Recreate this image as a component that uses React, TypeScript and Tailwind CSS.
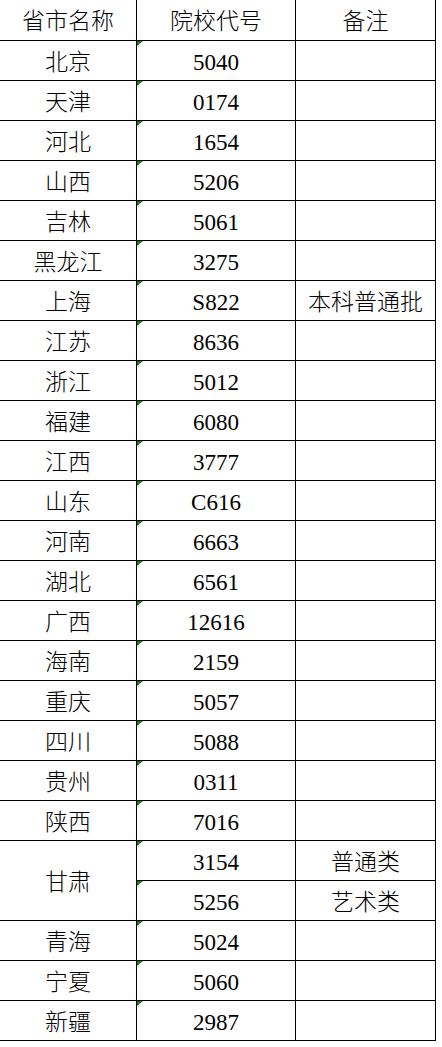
const rows: [string, string, string][] = [
  ["北京", "5040", ""],
  ["天津", "0174", ""],
  ["河北", "1654", ""],
  ["山西", "5206", ""],
  ["吉林", "5061", ""],
  ["黑龙江", "3275", ""],
  ["上海", "S822", "本科普通批"],
  ["江苏", "8636", ""],
  ["浙江", "5012", ""],
  ["福建", "6080", ""],
  ["江西", "3777", ""],
  ["山东", "C616", ""],
  ["河南", "6663", ""],
  ["湖北", "6561", ""],
  ["广西", "12616", ""],
  ["海南", "2159", ""],
  ["重庆", "5057", ""],
  ["四川", "5088", ""],
  ["贵州", "0311", ""],
  ["陕西", "7016", ""],
];

const tail: [string, string, string][] = [
  ["青海", "5024", ""],
  ["宁夏", "5060", ""],
  ["新疆", "2987", ""],
];

const cell = "flex items-center justify-center border-r border-b border-black h-[40px] pt-[3px]";

const Flag = () => (
  <span className="absolute left-0 top-0 w-0 h-0 border-t-[5px] border-r-[6px] border-t-[#1a7a1a] border-r-transparent" />
);

const CodeCell = ({ code }: { code: string }) => (
  <div className={cell + " relative font-normal"}>
    <Flag />
    {code}
  </div>
);

const Row = ({ r }: { r: [string, string, string] }) => (
  <>
    <div className={cell}>{r[0]}</div>
    <CodeCell code={r[1]} />
    <div className={cell}>{r[2]}</div>
  </>
);

export default function App() {
  return (
    <div
      className="bg-white w-[442px] min-h-[1047px] text-black text-[23px] leading-none font-light"
      style={{ fontFamily: '"Liberation Serif", "Noto Sans CJK SC", serif' }}
    >
      <div className="grid grid-cols-[137px_159px_140px] w-[436px]">
        <div className={cell + " h-[41px]"}>省市名称</div>
        <div className={cell + " h-[41px]"}>院校代号</div>
        <div className={cell + " h-[41px]"}>备注</div>

        {rows.map((r) => (
          <Row key={r[0]} r={r} />
        ))}

        <div className={cell + " row-span-2 h-[80px]"}>甘肃</div>
        <CodeCell code="3154" />
        <div className={cell}>普通类</div>
        <CodeCell code="5256" />
        <div className={cell}>艺术类</div>

        {tail.map((r) => (
          <Row key={r[0]} r={r} />
        ))}
      </div>
    </div>
  );
}
